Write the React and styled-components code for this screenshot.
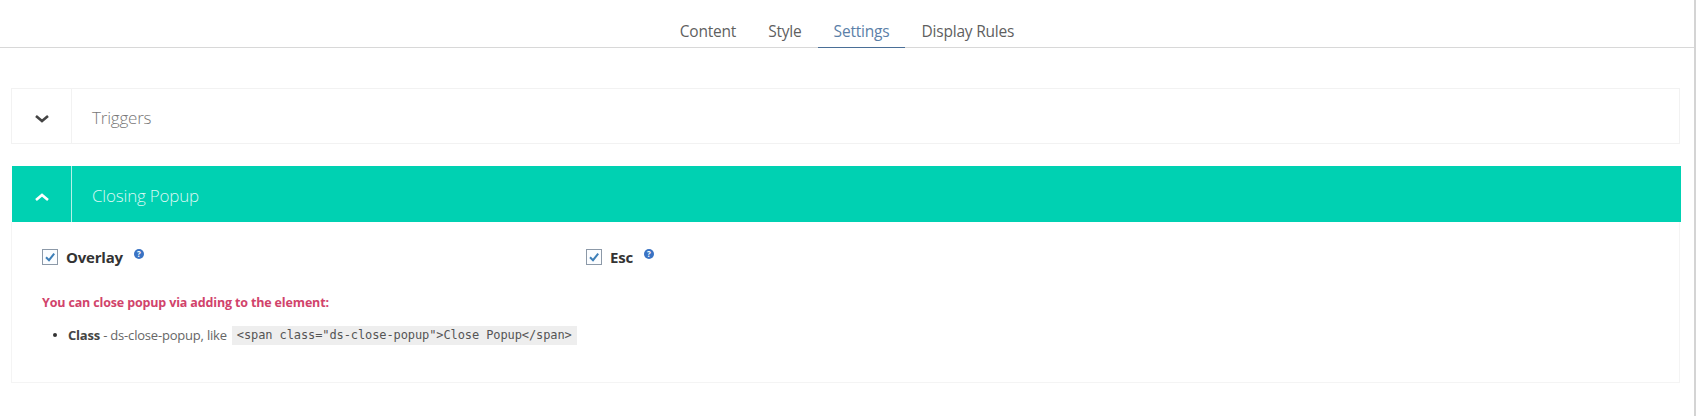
import styled, { createGlobalStyle } from "styled-components";

const GlobalStyle = createGlobalStyle`
  body {
    margin: 0;
    background-color: #ffffff;
    font-family: "Open Sans", "Liberation Sans", sans-serif;
  }
`;

const Page = styled.div`
  width: 1696px;
  height: 416px;
  box-sizing: border-box;
  border-right: 2px solid #d4d4d4;
  margin-right: 2px;
  overflow: hidden;
`;

const TabBar = styled.nav`
  display: flex;
  justify-content: center;
  height: 48px;
  box-sizing: border-box;
  border-bottom: 1px solid #d8d8d8;
`;

const Tab = styled.a`
  display: flex;
  align-items: center;
  height: 48px;
  box-sizing: border-box;
  padding: 14px 16px 0;
  font-size: 15.5px;
  letter-spacing: -0.2px;
  color: ${(p) => (p.$active ? "#5b7fa8" : "#5f5f5f")};
  border-bottom: 1px solid ${(p) => (p.$active ? "#4a6f97" : "transparent")};
`;

const Content = styled.main`
  display: flex;
  flex-direction: column;
  gap: 22px;
  padding: 40px 14px 0 11px;
`;

const PanelHeader = styled.div`
  display: flex;
  align-items: stretch;
  height: 56px;
  box-sizing: border-box;
  background-color: ${(p) => (p.$open ? "#00d1b2" : "#ffffff")};
  border: ${(p) => (p.$open ? "none" : "1px solid #f2f2f2")};
  margin: ${(p) => (p.$open ? "0 -1px 0 1px" : "0")};
`;

const Toggle = styled.div`
  display: flex;
  align-items: center;
  justify-content: center;
  width: 59px;
  padding-top: 5px;
  flex-shrink: 0;
  color: ${(p) => (p.$open ? "#ffffff" : "#444444")};
  border-right: 1px solid ${(p) => (p.$open ? "#b5f2e7" : "#f2f2f2")};
`;

const PanelTitle = styled.h3`
  margin: 0;
  display: flex;
  align-items: center;
  padding: 3px 0 0 20px;
  font-size: 17px;
  font-weight: 300;
  letter-spacing: -0.2px;
  color: ${(p) => (p.$open ? "#d9f8f2" : "#777777")};
`;

const PanelBody = styled.div`
  height: 161px;
  box-sizing: border-box;
  padding: 25px 31px 0 31px;
  background-color: #ffffff;
  border: 1px solid #f4f4f4;
  border-top: none;
  margin-top: -22px;
`;

const OptionRow = styled.div`
  display: grid;
  grid-template-columns: 544px 300px;
`;

const Option = styled.label`
  display: flex;
  align-items: center;
  height: 20px;
`;

const Checkbox = styled.span`
  display: flex;
  align-items: center;
  justify-content: center;
  width: 14px;
  height: 14px;
  margin: 0 8px 0 -1px;
  border: 1px solid #8c99a8;
  background-color: #fbfdff;
`;

const OptionLabel = styled.span`
  font-size: 15px;
  font-weight: 700;
  letter-spacing: -0.2px;
  color: #333333;
`;

const HelpIcon = styled.span`
  display: flex;
  align-items: center;
  justify-content: center;
  width: 10px;
  height: 10px;
  margin: -6px 0 0 11px;
  border-radius: 50%;
  background-color: #3a73c4;
  color: #ffffff;
  font-size: 8px;
  font-weight: 700;
  line-height: 1;
`;

const Notice = styled.p`
  margin: 27px 0 0 -1px;
  font-size: 12.5px;
  font-weight: 700;
  letter-spacing: -0.15px;
  line-height: 17px;
  color: #d1436b;
`;

const Notes = styled.ul`
  margin: 14px 0 0;
  padding: 0 0 0 10px;
  list-style: none;
`;

const Note = styled.li`
  position: relative;
  display: flex;
  align-items: center;
  height: 20px;
  font-size: 13px;
  letter-spacing: -0.2px;
  color: #666666;

  &::before {
    content: "";
    position: absolute;
    left: 0;
    top: 8px;
    width: 4px;
    height: 4px;
    border-radius: 50%;
    background-color: #333333;
  }
`;

const NoteText = styled.span`
  margin-left: 15px;
  white-space: pre;
`;

const Strong = styled.b`
  color: #444444;
`;

const Code = styled.code`
  margin-left: 5px;
  padding: 2px 5px;
  background-color: #eeeeee;
  color: #555555;
  font-family: "DejaVu Sans Mono", "Liberation Mono", monospace;
  font-size: 12px;
  letter-spacing: -0.1px;
  line-height: 15px;
`;

const Chevron = ({ up }) => (
  <svg width="16" height="10" viewBox="0 0 16 10" fill="none">
    <path
      d={up ? "M2 8 8 3l6 5" : "M2 2l6 5 6-5"}
      stroke="currentColor"
      strokeWidth="2.6"
    />
  </svg>
);

const Check = () => (
  <svg width="12" height="12" viewBox="0 0 12 12" fill="none">
    <path d="M2 6.2 5 9.2 10.2 2.6" stroke="#3d7fb8" strokeWidth="2" />
  </svg>
);

const Checked = ({ label }) => (
  <Option>
    <Checkbox>
      <Check />
    </Checkbox>
    <OptionLabel>{label}</OptionLabel>
    <HelpIcon>?</HelpIcon>
  </Option>
);

export default function App() {
  return (
    <>
      <GlobalStyle />
      <Page>
        <TabBar>
          <Tab>Content</Tab>
          <Tab>Style</Tab>
          <Tab $active>Settings</Tab>
          <Tab>Display Rules</Tab>
        </TabBar>
        <Content>
          <PanelHeader>
            <Toggle>
              <Chevron />
            </Toggle>
            <PanelTitle>Triggers</PanelTitle>
          </PanelHeader>
          <PanelHeader $open>
            <Toggle $open>
              <Chevron up />
            </Toggle>
            <PanelTitle $open>Closing Popup</PanelTitle>
          </PanelHeader>
          <PanelBody>
            <OptionRow>
              <Checked label="Overlay" />
              <Checked label="Esc" />
            </OptionRow>
            <Notice>You can close popup via adding to the element:</Notice>
            <Notes>
              <Note>
                <NoteText>
                  <Strong>Class</Strong> - ds-close-popup, like
                </NoteText>
                <Code>{'<span class="ds-close-popup">Close Popup</span>'}</Code>
              </Note>
            </Notes>
          </PanelBody>
        </Content>
      </Page>
    </>
  );
}
